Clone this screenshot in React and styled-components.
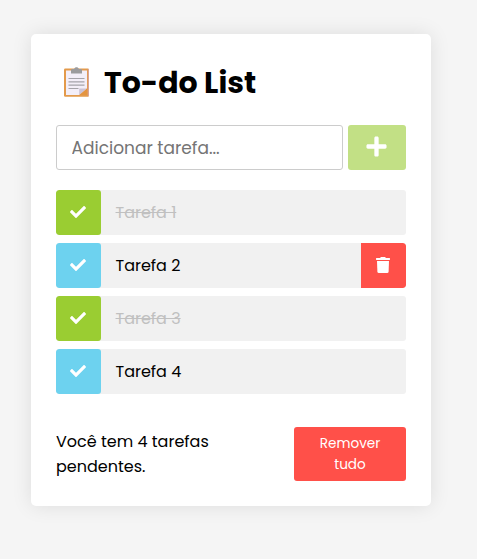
import React from "react";
import styled, { createGlobalStyle } from "styled-components";
import { FaCheck, FaPlus } from "react-icons/fa";

const GlobalStyle = createGlobalStyle`
  * { box-sizing: border-box; margin: 0; padding: 0; }
  body {
    background: #f5f5f5;
    color: #000;
    font-family: Poppins, Inter, sans-serif;
    font-size: 16px;
  }
  button, input { font-family: inherit; border: none; outline: none; }
`;

const Page = styled.main`
  min-height: 559px;
  padding: 34px 46px 53px 31px;
`;

const Card = styled.section`
  width: 400px;
  height: 472px;
  padding: 25px;
  background: #fff;
  border-radius: 5px;
  box-shadow: 0 0 20px rgba(0, 0, 0, 0.1);
`;

const Title = styled.h1`
  display: flex;
  align-items: center;
  height: 46px;
  padding-left: 7px;
  gap: 14px;
  font-size: 30px;
  line-height: 46px;
  font-weight: 700;
`;

const TitleText = styled.span`
  padding-top: 1px;
`;

const Form = styled.form`
  display: flex;
  gap: 5px;
  height: 45px;
  margin: 20px 0;
`;

const TaskInput = styled.input`
  width: 287px;
  padding: 0 15px 0 14.5px;
  border: 1px solid #ccc;
  border-radius: 3px;
  background: #fff;
  font-size: 17px;
  &::placeholder { color: #757575; opacity: 1; }
`;

const AddButton = styled.button`
  display: grid;
  place-items: center;
  width: 58px;
  padding: 0 1px 2px 0;
  border-radius: 3px;
  background: #c2e085;
  color: #fff;
  font-size: 23px;
`;

const List = styled.ul`
  display: grid;
  gap: 8px;
  list-style: none;
`;

const Item = styled.li`
  display: flex;
  height: 45px;
  overflow: hidden;
  border-radius: 3px;
  background: #f1f1f1;
`;

const IconButton = styled.button`
  display: grid;
  place-items: center;
  flex: 0 0 45px;
  padding: 0 1px 1px 0;
  border-radius: ${(p) => p.$radius || "3px"};
  background: ${(p) => p.$color};
  color: #fff;
  font-size: 16px;
`;

const TaskName = styled.span`
  flex: 1;
  padding-left: 14.5px;
  line-height: 45px;
  color: ${(p) => (p.$done ? "#c0c0c0" : "#000")};
  text-decoration: ${(p) => (p.$done ? "line-through" : "none")};
`;

const Footer = styled.footer`
  display: flex;
  justify-content: space-between;
  align-items: center;
  height: 54px;
  margin-top: 33px;
`;

const Summary = styled.p`
  width: 170px;
  line-height: 25px;
`;

const ClearButton = styled.button`
  width: 112px;
  height: 54px;
  padding: 6px 20px;
  border-radius: 3px;
  background: #ff5049;
  color: #fff;
  font-size: 13.6px;
  line-height: 21px;
`;

const ClipboardIcon = () => (
  <svg width="27" height="30" viewBox="0 0 27 30" aria-hidden="true">
    <rect x="1" y="1.5" width="25" height="28.2" rx="1.2" fill="#e39a4b" />
    <path d="M25.4 2v27" stroke="#d9a49c" strokeWidth="1.1" />
    <path d="M3 3.5h21v18L17 28H3z" fill="#f3eef8" />
    <path d="M16.2 21.5H24L16.2 28z" fill="#cdc3d6" />
    <path d="M24 21.5V28h-7.8z" fill="#e39440" />
    <path d="M8 6.5V3.2c0-.8.4-1.2 1.2-1.2h1.9C11.5.7 12.4.2 13.5.2s2 .5 2.4 1.8h1.9c.8 0 1.2.4 1.2 1.2v3.3z" fill="#9b9b9d" />
    <path d="M5.5 11.5h16M5.5 14.8h16M5.5 18.2h16M5.5 21.5h10" stroke="#a5a3a9" strokeWidth="1.2" />
  </svg>
);

const TrashIcon = () => (
  <svg width="14" height="16" viewBox="0 0 14 16" fill="currentColor" aria-hidden="true">
    <path d="M0.4 1H4.2L4.8 0H9.2L9.8 1H13.6Q14 1 14 1.4V2.6Q14 3 13.6 3H0.4Q0 3 0 2.6V1.4Q0 1 .4 1Z" />
    <path d="M1 4H13L12.6 14.7Q12.5 16 11.2 16H2.8Q1.5 16 1.4 14.7Z" />
  </svg>
);

const tasks = [
  { name: "Tarefa 1", done: true },
  { name: "Tarefa 2", done: false, removable: true },
  { name: "Tarefa 3", done: true },
  { name: "Tarefa 4", done: false },
];

export default function App() {
  return (
    <Page>
      <GlobalStyle />
      <Card>
        <Title>
          <ClipboardIcon />
          <TitleText>To-do List</TitleText>
        </Title>
        <Form onSubmit={(e) => e.preventDefault()}>
          <TaskInput placeholder="Adicionar tarefa..." />
          <AddButton aria-label="Adicionar"><FaPlus /></AddButton>
        </Form>
        <List>
          {tasks.map((task) => (
            <Item key={task.name}>
              <IconButton $color={task.done ? "#9acd32" : "#6dd2ef"} aria-label="Concluir">
                <FaCheck />
              </IconButton>
              <TaskName $done={task.done}>{task.name}</TaskName>
              {task.removable && (
                <IconButton $color="#ff5049" $radius="0 3px 3px 0" aria-label="Remover">
                  <TrashIcon />
                </IconButton>
              )}
            </Item>
          ))}
        </List>
        <Footer>
          <Summary>Você tem 4 tarefas pendentes.</Summary>
          <ClearButton>Remover tudo</ClearButton>
        </Footer>
      </Card>
    </Page>
  );
}
